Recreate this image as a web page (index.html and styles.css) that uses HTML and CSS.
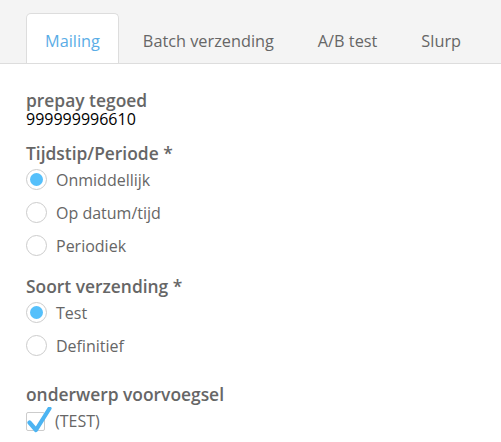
FILE: index.html
```html
<!DOCTYPE html>
<html lang="nl">
<head>
    <meta charset="UTF-8">
    <title>Mailing</title>
    <link rel="stylesheet" href="styles.css">
</head>
<body>
<div class="tabs">
    <a class="tab active">Mailing</a>
    <a class="tab">Batch verzending</a>
    <a class="tab">A/B test</a>
    <a class="tab">Slurp</a>
</div>

<div class="form">
    <div class="field field-info">
        <div class="label">prepay tegoed</div>
        <div class="value">999999996610</div>
    </div>

    <div class="field">
        <div class="label">Tijdstip/Periode *</div>
        <label class="option"><span class="radio checked"></span>Onmiddellijk</label>
        <label class="option"><span class="radio"></span>Op datum/tijd</label>
        <label class="option"><span class="radio"></span>Periodiek</label>
    </div>

    <div class="field">
        <div class="label">Soort verzending *</div>
        <label class="option"><span class="radio checked"></span>Test</label>
        <label class="option"><span class="radio"></span>Definitief</label>
    </div>

    <div class="field field-check">
        <div class="label">onderwerp voorvoegsel</div>
        <label class="option check-option">
            <span class="checkbox">
                <svg class="tick" width="26" height="26" viewBox="0 0 26 26">
                    <path d="M2.5 15.5 L9 23 L22.5 1.5" fill="none" stroke="#4cb4f2" stroke-width="4.2" stroke-linecap="round" stroke-linejoin="round"/>
                </svg>
            </span>(TEST)
        </label>
    </div>
</div>
</body>
</html>
```

FILE: styles.css
```css
* {
    box-sizing: border-box;
    font-family: 'Open Sans', sans-serif;
}
body {
    margin: 0;
    background: #fff;
}
.tabs {
    display: flex;
    align-items: flex-end;
    height: 64px;
    padding-left: 26px;
    background: #f4f4f4;
    border-bottom: 1px solid #ddd;
}
.tab {
    height: 50px;
    padding: 0 21px;
    line-height: 54px;
    font-size: 16.3px;
    color: #666;
    border: 1px solid transparent;
    border-bottom: none;
    border-radius: 5px 5px 0 0;
}
.tab.active {
    padding: 0 18px;
    margin-right: 2px;
    color: #5aade6;
    background: #fff;
    border-color: #ddd;
}
.form {
    padding: 26px 26px 0;
}
.field {
    display: flex;
    flex-direction: column;
    margin-bottom: 14px;
}
.field-info {
    margin-bottom: 15px;
}
/* the checkbox block sits a little further down than the radio groups */
.field-check {
    margin-top: 22px;
}
.label {
    font-size: 17.4px;
    font-weight: 600;
    color: #666;
    line-height: 20px;
}
.value {
    margin-top: 1px;
    font-size: 16px;
    color: #000;
    line-height: 17px;
}
.option {
    display: flex;
    align-items: center;
    height: 33px;
    font-size: 16px;
    color: #666;
}
.radio {
    width: 21px;
    height: 21px;
    margin-right: 9px;
    border: 1px solid #ccc;
    border-radius: 50%;
    display: flex;
    align-items: center;
    justify-content: center;
}
.radio.checked::after {
    content: '';
    width: 13px;
    height: 13px;
    border-radius: 50%;
    background: #55c0fb;
}
.check-option {
    height: 34px;
}
.checkbox {
    position: relative;
    width: 19px;
    height: 19px;
    margin-right: 10px;
    border: 1px solid #ccc;
    border-radius: 2px;
}
.tick {
    position: absolute;
    left: 0;
    top: -6px;
}
```
